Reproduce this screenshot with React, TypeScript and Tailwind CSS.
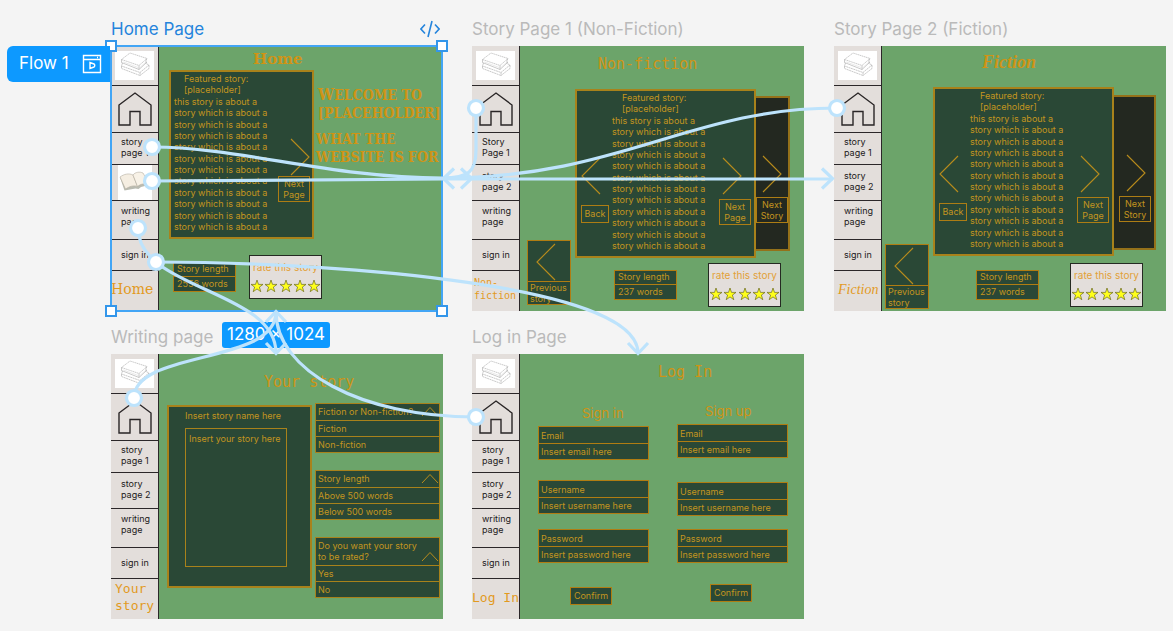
import React, { useId } from "react";

const STORY_LINES = [
  "this story is about a",
  ...Array.from({ length: 11 }, () => "story which is about a"),
];

function BooksIcon() {
  return (
    <svg viewBox="0 0 39 29" className="h-[29px] w-[39px] bg-white" fill="none" stroke="#a6a6a6" strokeWidth="0.6" aria-hidden="true">
      <path d="M6.500 8.500 15 2 32 7.500 24 14.500z" strokeDasharray="1.500 0.500" />
      <path d="M6.500 8.500v3L24 18.500l8-7.500M24 14.500v4M32 7.500l-1 2v3" />
      <path d="M7.500 12l-1 3L25 21.500l9-7.500-3-1.500M6.500 15v2.500L25 24.500l9-7v-3.500M25 21.500v3" strokeDasharray="2 0.500" />
      <path d="M8.500 11l16 6 6.500-6" stroke="#dcdcdc" />
    </svg>
  );
}

function OpenBookIcon() {
  return (
    <svg viewBox="0 0 34 35" className="h-[35px] w-[34px] bg-white" fill="none" aria-hidden="true">
      <path d="M2 12.500 6.500 25.500 17.500 23.500l3 .5 2.500-2 8-2L27 11z" fill="#b9bbb1" />
      <path d="M2 12c4-3 9-4 13-2l4.500 11.500c-4-1.500-8 0-12 2.500z" fill="#f5eee2" stroke="#b3ad9f" strokeWidth="0.6" />
      <path d="M15 10c2-3 7-3.500 10-2l6.500 11.500c-5-1.500-9-.5-12 2z" fill="#f8f2e7" stroke="#b3ad9f" strokeWidth="0.6" />
    </svg>
  );
}

function HouseIcon() {
  return (
    <svg viewBox="0 0 34 34" className="h-[34px] w-[34px]" fill="none" stroke="#292526" strokeWidth="1.4" aria-hidden="true">
      <path d="M1 13 17 1l16 12v20H22V19.500H12V33H1z" />
    </svg>
  );
}

function Chevron({ dir }: { dir: "left" | "right" }) {
  return (
    <svg viewBox="0 0 20 38" className="h-[38px] w-5" fill="none" stroke="#b98c1c" strokeWidth="1.1" aria-hidden="true">
      <path d={dir === "right" ? "M1 1 19 19 1 37" : "M19 1 1 19l18 18"} />
    </svg>
  );
}

function Sidebar({ label, labelClass, first = "story page 1", book = false }: { label: React.ReactNode; labelClass: string; first?: string; book?: boolean }) {
  const cell = "flex shrink-0 border-b border-[#2b2729] text-left";
  return (
    <nav className="flex w-12 shrink-0 flex-col border-r border-[#2b2729] bg-[#e3dedb] text-[9px] leading-[11px] text-[#1c191a]">
      <button className={`${cell} h-10 items-center justify-center`} aria-label="Library"><BooksIcon /></button>
      <button className={`${cell} h-[47px] items-center justify-center`} aria-label="Home"><HouseIcon /></button>
      <button className={`${cell} h-8 items-center pr-0.5 pb-1 pl-2.5`}>{first}</button>
      {book ? (
        <button className={`${cell} h-9 items-center justify-center`} aria-label="story page 2"><OpenBookIcon /></button>
      ) : (
        <button className={`${cell} h-9 items-center pr-0.5 pb-1 pl-2.5`}>story page 2</button>
      )}
      <button className={`${cell} h-[39px] pt-1 pr-0.5 pl-2.5`}>writing page</button>
      <button className={`${cell} h-[31px] items-center pb-0.5 pl-2.5`}>sign in</button>
      <div className={`flex flex-1 items-center pb-1 whitespace-nowrap text-[#e29a1f] ${labelClass}`}>{label}</div>
    </nav>
  );
}

function Frame({ title, place, active = false, sidebar, children }: { title: string; place: string; active?: boolean; sidebar: React.ReactNode; children: React.ReactNode }) {
  return (
    <section className={`absolute w-[332px] ${place}`}>
      <h2 className={`flex h-7 items-start justify-between text-[17px] leading-[22px] ${active ? "text-[#2484dc]" : "text-[#bababa]"}`}>
        <span>{title}</span>
        {active && (
          <svg viewBox="0 0 20 18" className="mt-0.5 mr-[3px] h-[18px] w-5" fill="none" stroke="currentColor" strokeWidth="1.6" aria-hidden="true">
            <path d="M5 4.500.9 9 5 13.500M15 4.500 19.100 9 15 13.500M12 1 8 17" />
          </svg>
        )}
      </h2>
      <div className="flex h-[265px] bg-[#6ca46a]">
        {sidebar}
        <div className="flex min-w-0 flex-1 text-[#c3951f]">{children}</div>
      </div>
    </section>
  );
}

function StoryText({ className }: { className: string }) {
  return (
    <div className={`flex h-[160px] flex-col justify-between pt-px text-[9px] leading-[11px] whitespace-nowrap ${className}`}>
      <p className="pl-2.5">Featured story:</p>
      <p className="pl-2.5">[placeholder]</p>
      {STORY_LINES.map((line, i) => (
        <p key={i}>{line}</p>
      ))}
    </div>
  );
}

function PagerButton({ children, className = "" }: { children: React.ReactNode; className?: string }) {
  return (
    <button className={`h-[26px] w-8 border border-[#ad7d14] text-center text-[9px] leading-[11px] ${className}`}>{children}</button>
  );
}

function StoryLength({ words, className }: { words: string; className: string }) {
  return (
    <dl className={`h-[30px] w-[63px] shrink-0 border border-[#b07d12] bg-[#2a4836] text-[9px] leading-[13px] whitespace-nowrap ${className}`}>
      <dt className="h-3.5 border-b border-[#b07d12] pl-[3px] leading-[11px]">Story length</dt>
      <dd className="pl-[3px]">{words}</dd>
    </dl>
  );
}

function Rating({ className }: { className: string }) {
  return (
    <div className={`flex h-11 w-[73px] shrink-0 flex-col justify-between border border-[#252a22] bg-[#e3dedb] pt-1 pb-[5px] ${className}`}>
      <p className="text-center text-[10px] leading-[14px] whitespace-nowrap text-[#e2a037]">rate this story</p>
      <div className="flex justify-between">
        {[1, 2, 3, 4, 5].map((n) => (
          <button key={n} aria-label={`Rate ${n}`}>
            <svg viewBox="0 0 14 14" className="h-3.5 w-3.5" fill="#ffff1a" stroke="#6b6c1d" strokeWidth="0.7" aria-hidden="true">
              <path d="M7 1l1.500 4.400H13L9.400 8.100l1.400 4.600L7 9.900l-3.800 2.800 1.400-4.600L1 5.400h4.500z" />
            </svg>
          </button>
        ))}
      </div>
    </div>
  );
}

function StoryFrame(props: { heading: string; headingClass: string; leftClass: string; prevClass: string; sideClass: string; sidePad: string; sideButton: string; footClass: string }) {
  return (
    <>
      <div className={`shrink-0 ${props.leftClass}`}>
        <button className={`flex h-[65px] w-11 flex-col border border-[#b07d12] bg-[#2a4836] text-left text-[9px] leading-[11px] ${props.prevClass}`}>
          <span className="flex h-[41px] w-full justify-center border-b border-[#b07d12] pt-0.5 pr-1.5"><Chevron dir="left" /></span>
          <span className="w-full pl-0.5">Previous story</span>
        </button>
      </div>
      <div className="min-w-0 flex-1">
        <h3 className={`whitespace-nowrap text-[#cf9416] ${props.headingClass}`}>{props.heading}</h3>
        <div className="flex items-start">
          <div className="flex h-[169px] w-[181px] shrink-0 border-2 border-[#a8821b] bg-[#2a4836]">
            <div className="w-[35px] shrink-0 pt-[66px] pl-1">
              <Chevron dir="left" />
              <button className="mt-2.5 h-[18px] w-7 border border-[#ad7d14] text-center text-[9px] leading-4">Back</button>
            </div>
            <StoryText className="w-[105px] shrink-0" />
            <div className="pt-[66px] pl-0.5">
              <span className="block pl-[3px]"><Chevron dir="right" /></span>
              <PagerButton className="mt-1">Next Page</PagerButton>
            </div>
          </div>
          <div className={`h-[155px] border-2 border-l-0 border-[#94711a] bg-[#232820] ${props.sideClass}`}>
            <span className={`block ${props.sidePad}`}><Chevron dir="right" /></span>
            <PagerButton className={`mt-1 block ${props.sideButton}`}>Next Story</PagerButton>
          </div>
        </div>
        <div className={`flex items-start ${props.footClass}`}>
          <StoryLength words="237 words" className="mt-[7px]" />
          <Rating className="ml-[31px]" />
        </div>
      </div>
    </>
  );
}

function Dropdown({ title, options, tall = false }: { title: string; options: string[]; tall?: boolean }) {
  return (
    <div className="w-[125px] border border-[#a8821b] bg-[#2a4836] text-[9px]">
      <button className={`flex w-full items-end justify-between text-left ${tall ? "h-[27px] leading-[11px]" : "h-4 leading-4"}`}>
        <span className={tall ? "w-[110px] shrink-0 pb-[3px] pl-0.5" : "w-[103px] shrink-0 pl-0.5 whitespace-nowrap"}>{title}</span>
        <svg viewBox="0 0 18 12" className={`mb-0.5 h-3 w-[18px] shrink-0 ${tall ? "-ml-2" : ""}`} fill="none" stroke="#b98c1c" aria-hidden="true">
          <path d="M1 10 9 1.500 17 10" />
        </svg>
      </button>
      <ul>
        {options.map((o) => (
          <li key={o} className="h-4 border-t border-[#a8821b] pl-0.5 leading-4">{o}</li>
        ))}
      </ul>
    </div>
  );
}

function Field({ label, placeholder, type = "text", className = "" }: { label: string; placeholder: string; type?: string; className?: string }) {
  const id = useId();
  return (
    <div className={`h-[34px] w-[111px] border border-[#b07d12] bg-[#2a4836] text-[9px] ${className}`}>
      <label htmlFor={id} className="block h-4 pl-0.5 leading-[17px]">{label}</label>
      <input id={id} type={type} placeholder={placeholder} className="block h-4 w-full border-t border-[#b07d12] bg-transparent pl-0.5 leading-4 outline-none placeholder:text-[#c3951f]" />
    </div>
  );
}

function LoginColumn({ title, titleClass, place, gaps, buttonClass }: { title: string; titleClass: string; place: string; gaps: [string, string]; buttonClass: string }) {
  return (
    <form className={`w-[111px] ${place}`} onSubmit={(e) => e.preventDefault()}>
      <h4 className={`text-[13px] leading-[18px] text-[#cf9416] ${titleClass}`}>{title}</h4>
      <Field label="Email" placeholder="Insert email here" className="mt-1" />
      <Field label="Username" placeholder="Insert username here" className={gaps[0]} />
      <Field label="Password" placeholder="Insert password here" type="password" className={gaps[1]} />
      <button className={`block h-[18px] w-[42px] border border-[#b07d12] bg-[#2a4836] text-center text-[9px] leading-4 ${buttonClass}`}>Confirm</button>
    </form>
  );
}

const HANDLES = [[152, 147], [152, 181], [138, 228], [156, 262], [476, 108], [837, 108], [134, 398], [476, 417]];

function Connectors() {
  return (
    <svg className="pointer-events-none absolute top-0 left-0 h-[631px] w-[1173px]" viewBox="0 0 1173 631" fill="none" stroke="#bde3fc" strokeWidth="3.200" aria-hidden="true">
      <path d="M152 147C240 147 330 178 443 178H472" />
      <path d="M152 181 443 179H833" />
      <path d="M476 108V150C476 172 468 178 443 178" />
      <path d="M837 108C690 108 620 178 443 178" />
      <path d="M156 262C300 262 638 280 638 353" />
      <path d="M138 228C138 290 276 290 276 353" />
      <path d="M134 398C134 350 276 365 276 312" />
      <path d="M476 417C360 417 276 370 276 312" />
      <path d="M461 168.500 471.500 178.500 461 188.500M454 168.500 443.500 178.500 454 188.500M822 168.500 832.500 178.500 822 188.500" />
      <path d="M628 343 638 353.500 648 343M266 343 276 353.500 286 343M266 322 276 311.500 286 322" />
      {HANDLES.map(([x, y]) => (
        <circle key={`${x}-${y}`} cx={x} cy={y} r="7.500" fill="#fff" />
      ))}
    </svg>
  );
}

export default function App() {
  return (
    <main className="relative min-h-screen overflow-hidden bg-[#f4f4f4] font-['Inter',sans-serif]">
      <Frame
        title="Home Page"
        place="top-[18px] left-[111px]"
        active
        sidebar={<Sidebar book label="Home" labelClass="font-['DejaVu_Serif',serif] text-[14px]" />}
      >
        <div className="min-w-0 flex-1">
          <h3 className="h-6 pl-[94px] font-['DejaVu_Serif',serif] text-[15px] leading-[26px] font-bold text-[#cf9416]">Home</h3>
          <div className="flex">
            <div className="ml-2.5 flex h-[169px] w-[145px] shrink-0 border-2 border-[#a8821b] bg-[#2a4836]">
              <StoryText className="w-[107px] shrink-0 pl-[3px]" />
              <div className="flex flex-col items-end pt-[66px]">
                <Chevron dir="right" />
                <PagerButton>Next Page</PagerButton>
              </div>
            </div>
            <div className="pt-4 pl-0.5 font-['DejaVu_Serif_Condensed','DejaVu_Serif',serif] text-[14px] leading-[18px] font-bold whitespace-nowrap text-[#cf9416] uppercase">
              <p className="pl-0.5 first-letter:text-[16px]">Welcome to</p>
              <p className="pl-0.5">[placeholder]</p>
              <p className="mt-2">what the</p>
              <p>website is for</p>
            </div>
          </div>
          <div className="mt-4 flex items-start pl-3.5">
            <StoryLength words="2556 words" className="mt-[7px]" />
            <Rating className="ml-[13px]" />
          </div>
        </div>
      </Frame>

      <Frame
        title="Story Page 1 (Non-Fiction)"
        place="top-[18px] left-[472px]"
        sidebar={<Sidebar first="Story Page 1" label={<span>Non-<br />fiction</span>} labelClass="pl-0.5 font-['DejaVu_Sans_Mono',monospace] text-[10px] leading-[13px]" />}
      >
        <StoryFrame
          heading="Non-fiction"
          headingClass="h-[43px] pl-[23px] font-['DejaVu_Sans_Mono',monospace] text-[15px] leading-9"
          leftClass="w-[55px] pl-[7px]"
          prevClass="mt-[194px]"
          sideClass="mt-[7px] w-[34px]"
          sidePad="pt-[57px] pl-1.5"
          sideButton="ml-auto"
          footClass="mt-[5px] pl-[39px]"
        />
      </Frame>

      <Frame
        title="Story Page 2 (Fiction)"
        place="top-[18px] left-[834px]"
        sidebar={<Sidebar label="Fiction" labelClass="pl-1 font-['Liberation_Serif',serif] text-[14px] italic" />}
      >
        <StoryFrame
          heading="Fiction"
          headingClass="h-[41px] pl-[49px] font-['Liberation_Serif',serif] text-[18px] leading-8 font-bold italic"
          leftClass="w-[51px] pl-[3px]"
          prevClass="mt-[198px]"
          sideClass="mt-2 w-[42px]"
          sidePad="pt-[57px] pl-3"
          sideButton="ml-[5px]"
          footClass="mt-[7px] pl-[43px]"
        />
      </Frame>

      <Frame
        title="Writing page"
        place="top-[326px] left-[111px]"
        sidebar={<Sidebar label={<span>Your<br />story</span>} labelClass="pl-1 font-['DejaVu_Sans_Mono',monospace] text-[13px] leading-[17px]" />}
      >
        <div className="min-w-0 flex-1">
          <h3 className="h-[49px] pt-[18px] pl-[105px] font-['DejaVu_Sans_Mono',monospace] text-[15px] leading-5 text-[#cf9416]">Your story</h3>
          <div className="flex items-start pl-2">
            <div className="mt-0.5 flex h-[183px] w-[145px] shrink-0 flex-col border-2 border-[#a8821b] bg-[#2a4836] pl-4 text-[9px]">
              <input aria-label="Story name" placeholder="Insert story name here" className="mb-1 h-[17px] w-[120px] bg-transparent outline-none placeholder:text-[#c3951f]" />
              <textarea aria-label="Story" placeholder="Insert your story here" className="h-[139px] w-[102px] resize-none overflow-hidden border border-[#a8821b] bg-transparent pt-[3px] pl-[3px] leading-[13px] whitespace-nowrap outline-none placeholder:text-[#c3951f]" />
            </div>
            <div className="ml-[3px] flex flex-col gap-[17px]">
              <Dropdown title="Fiction or Non-fiction?" options={["Fiction", "Non-fiction"]} />
              <Dropdown title="Story length" options={["Above 500 words", "Below 500 words"]} />
              <Dropdown title="Do you want your story to be rated?" options={["Yes", "No"]} tall />
            </div>
          </div>
        </div>
      </Frame>

      <Frame
        title="Log in Page"
        place="top-[326px] left-[472px]"
        sidebar={<Sidebar label="Log In" labelClass="font-['DejaVu_Sans_Mono',monospace] text-[13px]" />}
      >
        <div className="min-w-0 flex-1">
          <h3 className="h-12 pt-2 pl-[138px] font-['DejaVu_Sans_Mono',monospace] text-[15px] leading-5 text-[#cf9416]">Log In</h3>
          <div className="flex items-start gap-7 pl-[18px]">
            <LoginColumn title="Sign in" titleClass="pl-11" place="mt-0.5" gaps={["mt-5", "mt-[15px]"]} buttonClass="mt-6 ml-8" />
            <LoginColumn title="Sign up" titleClass="pl-7" place="" gaps={["mt-6", "mt-[13px]"]} buttonClass="mt-[21px] ml-[33px]" />
          </div>
        </div>
      </Frame>

      <div className="pointer-events-none absolute top-[45px] left-[110px] h-[267px] w-[333px] border-2 border-[#42a5f5]">
        {["-top-[7px] -left-[7px]", "-top-[7px] -right-[7px]", "-bottom-[7px] -left-[7px]", "-right-[7px] -bottom-[7px]"].map((corner) => (
          <span key={corner} className={`absolute size-3 border-2 border-[#3396ea] bg-white ${corner}`} />
        ))}
      </div>

      <button className="absolute top-[46px] left-[7px] flex h-9 w-[103px] items-center justify-between rounded-l-md bg-[#0d99ff] pr-2 pl-3 text-[17px] text-white">
        Flow 1
        <svg viewBox="0 0 20 20" className="size-5" fill="none" stroke="currentColor" strokeWidth="1.4" aria-hidden="true">
          <path d="M1.500 1.500h17v17h-17zM1.500 5.500h17M4.500 3.500h.01M15 3.500h1M8 8.500v6l4-1.500c1-.5 1-2.500 0-3z" />
        </svg>
      </button>

      <div className="absolute top-[322px] left-[222px] flex h-[26px] w-[108px] items-center justify-center rounded-[3px] bg-[#0d99ff] text-[17px] whitespace-nowrap text-white">1280 × 1024</div>

      <Connectors />
    </main>
  );
}
